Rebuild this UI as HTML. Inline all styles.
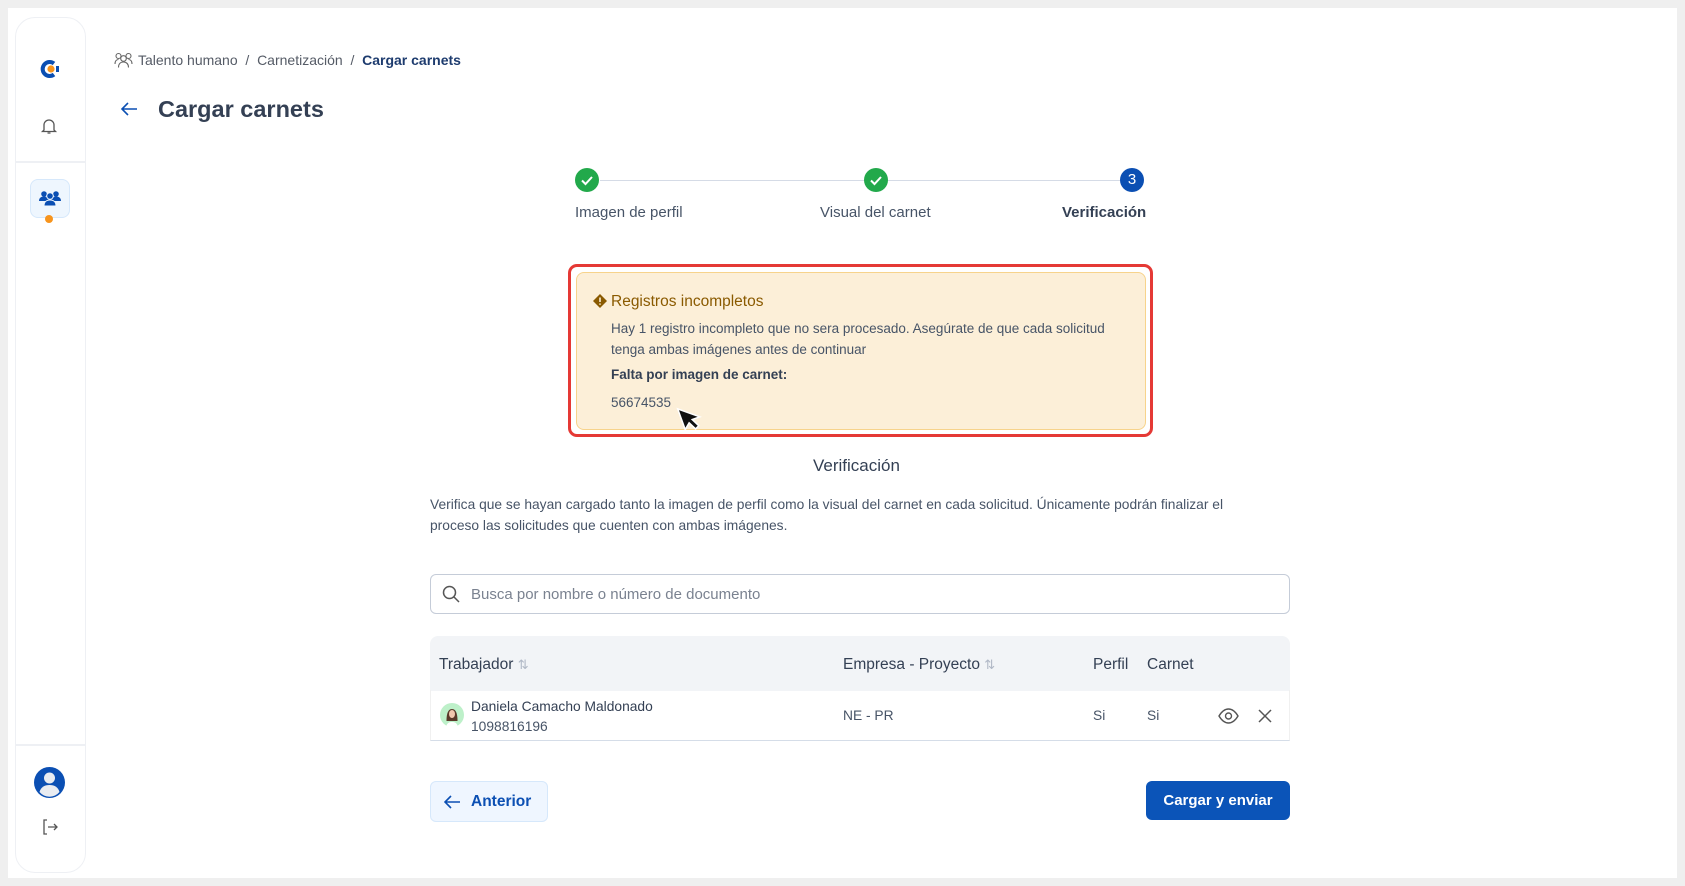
<!DOCTYPE html>
<html><head><meta charset="utf-8"><style>
*{box-sizing:border-box;margin:0;padding:0}
body{width:1685px;height:886px;background:#efefef;font-family:"Liberation Sans",sans-serif;position:relative;overflow:hidden;color:#344054}
.abs{position:absolute}
.panel{left:8px;top:8px;width:1669px;height:870px;background:#fff}
.side{left:15px;top:17px;width:71px;height:856px;border:1px solid #eef0f4;border-radius:20px;background:#fff}
.t{position:absolute;white-space:nowrap}
</style></head><body>
<div class="abs panel"></div>
<div class="abs side"></div>
<div class="abs" style="left:16px;top:161px;width:69px;height:2px;background:#eef0f4"></div>
<div class="abs" style="left:16px;top:744px;width:69px;height:2px;background:#eef0f4"></div>
<svg class="abs" style="left:39px;top:59px" width="22" height="20" viewBox="0 0 22 20"><path d="M15 4.5A7 7 0 1 0 15 15.5" stroke="#0b4fb3" stroke-width="4" fill="none"/><circle cx="12" cy="10" r="3.6" fill="#f7941d"/><path d="M17 7h3v6h-3z" fill="#0b4fb3"/></svg>
<svg class="abs" style="left:40px;top:117px" width="18" height="18" viewBox="0 0 18 18" fill="none" stroke="#555" stroke-width="1.3"><path d="M4 13V8a5 5 0 0 1 10 0v5l1.5 1.5h-13z"/><path d="M7.5 16h3"/></svg>
<div class="abs" style="left:30px;top:179px;width:40px;height:39px;background:#eef6fe;border:1px solid #d6e8fb;border-radius:8px"></div>
<svg class="abs" style="left:39px;top:190px" width="22" height="16" viewBox="0 0 22 16" fill="#0b4fb3"><circle cx="5" cy="4" r="2.8"/><circle cx="17" cy="4" r="2.8"/><path d="M0 11c0-3 2-4.5 5-4.5s5 1.5 5 4.5z"/><path d="M12 11c0-3 2-4.5 5-4.5s5 1.5 5 4.5z"/><circle cx="11" cy="6" r="3.3" stroke="#eef6fe" stroke-width="1"/><path d="M5 16c0-4 2.5-6 6-6s6 2 6 6z" stroke="#eef6fe" stroke-width="1"/></svg>
<div class="abs" style="left:45px;top:215px;width:8px;height:8px;border-radius:50%;background:#f7941d"></div>
<svg class="abs" style="left:34px;top:767px" width="31" height="31" viewBox="0 0 31 31"><circle cx="15.5" cy="15.5" r="15.5" fill="#0b4fb3"/><circle cx="15.5" cy="11" r="5.5" fill="#e9ecf1"/><path d="M5.5 25c1.5-5 5-7 10-7s8.5 2 10 7a13 13 0 0 1-20 0z" fill="#e9ecf1"/></svg>
<svg class="abs" style="left:42px;top:819px" width="17" height="16" viewBox="0 0 17 16" fill="none" stroke="#555" stroke-width="1.3"><path d="M5 1H2v14h3"/><path d="M6 8h9M12 5l3 3-3 3"/></svg>

<svg class="abs" style="left:114px;top:52px" width="19" height="16" viewBox="0 0 19 16" fill="none" stroke="#666" stroke-width="1.1"><circle cx="4.5" cy="4" r="2.5"/><circle cx="14.5" cy="4" r="2.5"/><circle cx="9.5" cy="6.5" r="2.8"/><path d="M1 12c0-3 1.5-4.5 3.5-4.5M18 12c0-3-1.5-4.5-3.5-4.5M4.5 15.5c0-3.5 2-5.5 5-5.5s5 2 5 5.5"/></svg>
<div class="t" style="left:138px;top:52px;font-size:14px;color:#555b66">Talento humano&nbsp; / &nbsp;Carnetización&nbsp; / &nbsp;<b style="color:#1d3b6e">Cargar carnets</b></div>
<svg class="abs" style="left:120px;top:101px" width="18" height="16" viewBox="0 0 18 16" fill="none" stroke="#0b4fb3" stroke-width="1.6"><path d="M17 8H2M8 2L2 8l6 6"/></svg>
<div class="t" style="left:158px;top:96px;font-size:23.5px;font-weight:bold;color:#344054">Cargar carnets</div>

<div class="abs" style="left:600px;top:180px;width:520px;height:1px;background:#d5dbe6"></div>
<svg class="abs" style="left:575px;top:168px" width="24" height="24"><circle cx="12" cy="12" r="12" fill="#22a94b"/><path d="M7 12.5l3.5 3.5 6.5-7" stroke="#fff" stroke-width="2" fill="none"/></svg>
<svg class="abs" style="left:864px;top:168px" width="24" height="24"><circle cx="12" cy="12" r="12" fill="#22a94b"/><path d="M7 12.5l3.5 3.5 6.5-7" stroke="#fff" stroke-width="2" fill="none"/></svg>
<div class="abs" style="left:1120px;top:168px;width:24px;height:24px;border-radius:50%;background:#0b4fb3;color:#fff;font-size:15px;text-align:center;line-height:24px">3</div>
<div class="t" style="left:575px;top:204px;font-size:15px;color:#475467">Imagen de perfil</div>
<div class="t" style="left:820px;top:204px;font-size:15px;color:#475467">Visual del carnet</div>
<div class="t" style="left:1062px;top:204px;font-size:15px;color:#344054;font-weight:bold">Verificación</div>

<div class="abs" style="left:568px;top:264px;width:585px;height:173px;border:3px solid #e53935;border-radius:9px"></div>
<div class="abs" style="left:576px;top:272px;width:570px;height:158px;background:#fcefd8;border:1px solid #f7d38b;border-radius:8px"></div>
<svg class="abs" style="left:593px;top:294px" width="14" height="14" viewBox="0 0 14 14"><path d="M7 0L14 7 7 14 0 7z" fill="#8a5a00"/><path d="M7 3.5v4.5M7 9.5v1.2" stroke="#fcefd8" stroke-width="1.6"/></svg>
<div class="t" style="left:611px;top:293px;font-size:15.5px;color:#8a5a00">Registros incompletos</div>
<div class="t" style="left:611px;top:318px;font-size:13.5px;color:#475467;line-height:21px">Hay 1 registro incompleto que no sera procesado. Asegúrate de que cada solicitud<br>tenga ambas imágenes antes de continuar</div>
<div class="t" style="left:611px;top:367px;font-size:13.5px;color:#344054;font-weight:bold">Falta por imagen de carnet:</div>
<div class="t" style="left:611px;top:395px;font-size:13.5px;color:#475467">56674535</div>
<svg class="abs" style="left:675px;top:405px" width="28" height="30" viewBox="0 0 28 30"><path d="M2 2v22l6-5 4 8 4-2-4-8h8z" fill="#111" stroke="#fff" stroke-width="1.5" transform="rotate(-20 2 2) translate(0,2)"/></svg>

<div class="t" style="left:813px;top:456px;font-size:17px;color:#344054">Verificación</div>
<div class="t" style="left:430px;top:494px;font-size:13.8px;color:#475467;line-height:21px">Verifica que se hayan cargado tanto la imagen de perfil como la visual del carnet en cada solicitud. Únicamente podrán finalizar el<br>proceso las solicitudes que cuenten con ambas imágenes.</div>

<div class="abs" style="left:430px;top:574px;width:860px;height:40px;border:1px solid #c5ccd8;border-radius:6px"></div>
<svg class="abs" style="left:442px;top:585px" width="18" height="18" viewBox="0 0 18 18" fill="none" stroke="#555" stroke-width="1.5"><circle cx="7.5" cy="7.5" r="6"/><path d="M12 12l5 5"/></svg>
<div class="t" style="left:471px;top:586px;font-size:15px;color:#7a8290">Busca por nombre o número de documento</div>

<div class="abs" style="left:430px;top:636px;width:860px;height:55px;background:#f2f4f7;border-radius:8px 8px 0 0"></div>
<div class="abs" style="left:430px;top:690px;width:860px;height:51px;border-bottom:1px solid #d5dde8;border-left:1px solid #f0f0f0;border-right:1px solid #f0f0f0"></div>
<div class="t" style="left:439px;top:656px;font-size:15.5px;color:#344054">Trabajador <span style="color:#b0b8c6;font-size:13px">⇅</span></div>
<div class="t" style="left:843px;top:656px;font-size:15.5px;color:#344054">Empresa - Proyecto <span style="color:#b0b8c6;font-size:13px">⇅</span></div>
<div class="t" style="left:1093px;top:656px;font-size:15.5px;color:#344054">Perfil</div>
<div class="t" style="left:1147px;top:656px;font-size:15.5px;color:#344054">Carnet</div>
<svg class="abs" style="left:440px;top:703px" width="24" height="24" viewBox="0 0 24 24"><circle cx="12" cy="12" r="12" fill="#bdf0c9"/><path d="M6.5 18c0-6 1-12 5.5-12s5.5 6 5.5 12z" fill="#5a3a2a"/><ellipse cx="12" cy="11" rx="3" ry="4" fill="#f1c7ad"/><path d="M6 24c1-4 3-5 6-5s5 1 6 5z" fill="#fff"/></svg>
<div class="t" style="left:471px;top:699px;font-size:13.8px;color:#344054">Daniela Camacho Maldonado</div>
<div class="t" style="left:471px;top:719px;font-size:13.8px;color:#475467">1098816196</div>
<div class="t" style="left:843px;top:708px;font-size:13.8px;color:#475467">NE - PR</div>
<div class="t" style="left:1093px;top:708px;font-size:13.8px;color:#475467">Si</div>
<div class="t" style="left:1147px;top:708px;font-size:13.8px;color:#475467">Si</div>
<svg class="abs" style="left:1218px;top:708px" width="21" height="16" viewBox="0 0 21 16" fill="none" stroke="#555" stroke-width="1.4"><path d="M1 8c3-5 6-7 9.5-7S17 3 20 8c-3 5-6 7-9.5 7S4 13 1 8z"/><circle cx="10.5" cy="8" r="3"/></svg>
<svg class="abs" style="left:1258px;top:709px" width="14" height="14" viewBox="0 0 14 14" stroke="#555" stroke-width="1.5"><path d="M1 1l12 12M13 1L1 13"/></svg>

<div class="abs" style="left:430px;top:781px;width:118px;height:41px;background:#eff6ff;border:1px solid #d6e8fb;border-radius:6px"></div>
<svg class="abs" style="left:444px;top:795px" width="17" height="14" viewBox="0 0 17 14" fill="none" stroke="#0b4fb3" stroke-width="1.6"><path d="M16 7H2M7 1L1 7l6 6"/></svg>
<div class="t" style="left:471px;top:793px;font-size:15.5px;color:#0b4fb3;font-weight:bold">Anterior</div>
<div class="abs" style="left:1146px;top:781px;width:144px;height:39px;background:#0b54b8;border-radius:6px;color:#fff;font-size:15px;font-weight:bold;text-align:center;line-height:40px">Cargar y enviar</div>
</body></html>
